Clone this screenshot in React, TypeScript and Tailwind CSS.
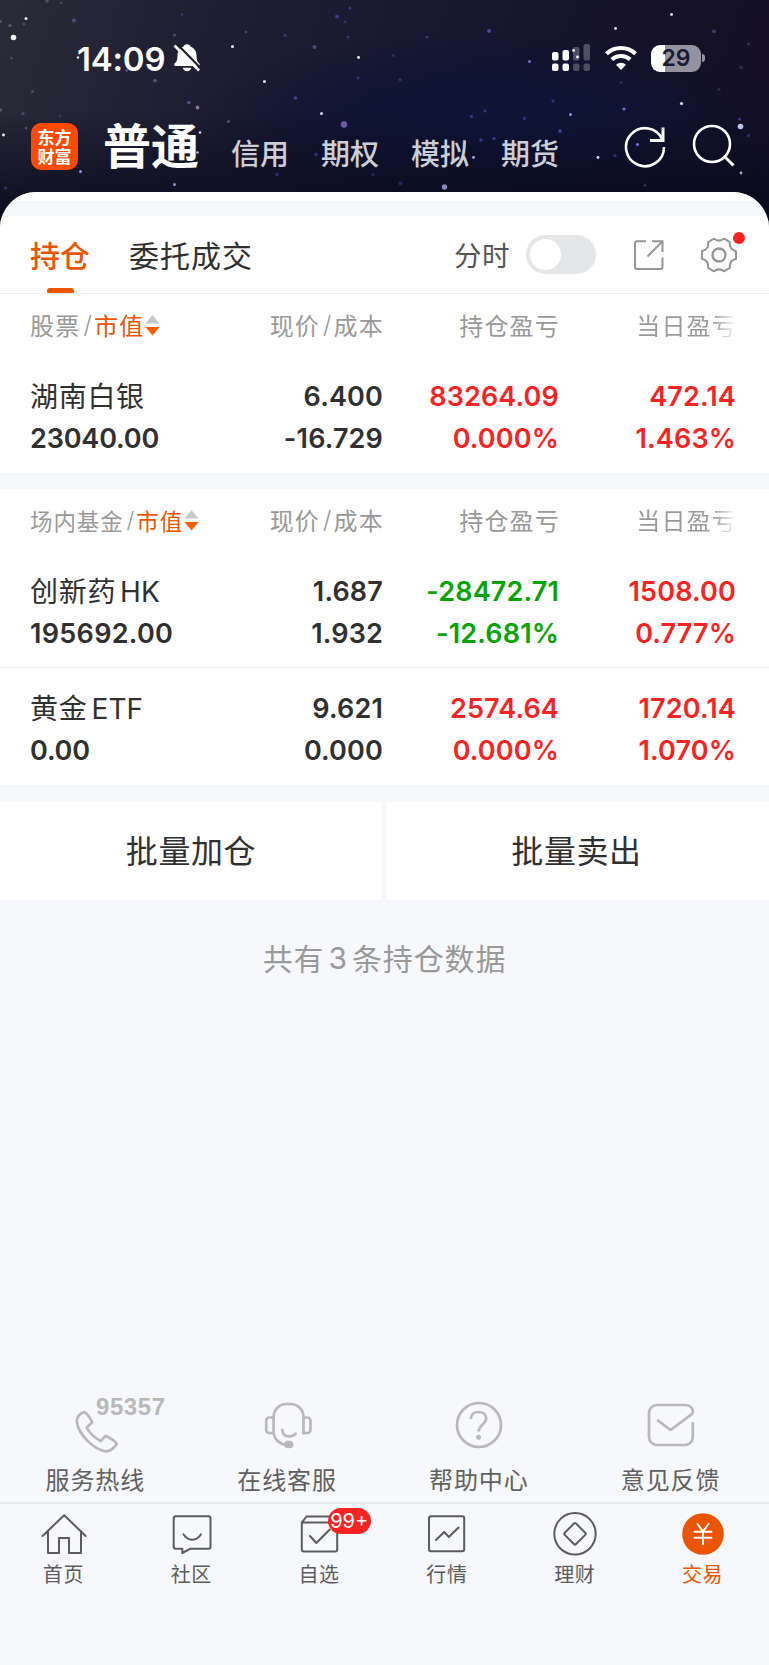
import type { ReactNode } from "react";

type Tone = "dark" | "up" | "down";

type Cell = { top: string; bottom: string; tone: Tone };

type Holding = { name: string; suffix?: string; value: string; cells: Cell[] };

const TONE: Record<Tone, string> = {
  dark: "text-[#303030]",
  up: "text-[#fa2323]",
  down: "text-[#05a405]",
};

const STOCKS: Holding[] = [
  {
    name: "湖南白银",
    value: "23040.00",
    cells: [
      { top: "6.400", bottom: "-16.729", tone: "dark" },
      { top: "83264.09", bottom: "0.000%", tone: "up" },
      { top: "472.14", bottom: "1.463%", tone: "up" },
    ],
  },
];

const FUNDS: Holding[] = [
  {
    name: "创新药",
    suffix: "HK",
    value: "195692.00",
    cells: [
      { top: "1.687", bottom: "1.932", tone: "dark" },
      { top: "-28472.71", bottom: "-12.681%", tone: "down" },
      { top: "1508.00", bottom: "0.777%", tone: "up" },
    ],
  },
  {
    name: "黄金",
    suffix: "ETF",
    value: "0.00",
    cells: [
      { top: "9.621", bottom: "0.000", tone: "dark" },
      { top: "2574.64", bottom: "0.000%", tone: "up" },
      { top: "1720.14", bottom: "1.070%", tone: "up" },
    ],
  },
];

// [x, y, 半径, 颜色, 透明度]
const STARS: [number, number, number, string, number][] = [
  [13.5, 37.5, 2.8, "#fff", 0.95], [26, 18.5, 1.5, "#fff", 0.9], [10, 25.5, 1.5, "#7a78b4", 0.6],
  [0.5, 21.5, 1.5, "#7a78b4", 0.6], [24, 24, 1.5, "#6a68a0", 0.5], [74, 20.5, 2, "#5f5f95", 0.7],
  [47, 1, 1.8, "#6a68a0", 0.6], [61, 3, 1.2, "#6a68a0", 0.5], [11.5, 58, 1.6, "#5a5888", 0.6],
  [78, 57.5, 1.2, "#fff", 0.9], [174.5, 35, 1.6, "#6b5fa0", 0.6], [182, 14.5, 1.4, "#4a4590", 0.6],
  [232.5, 46.5, 1.5, "#fff", 0.95], [246, 32, 1.6, "#544ea0", 0.7], [285, 35.5, 1.4, "#544ea0", 0.6],
  [314.5, 47, 2, "#6a5fa0", 0.7], [337, 16.5, 2, "#5048a8", 0.7], [350, 8, 1.5, "#4a4590", 0.7],
  [345, 22, 1.4, "#4a4590", 0.6], [348, 37, 1.6, "#4a4590", 0.7], [358.5, 57.5, 1.4, "#fff", 0.95],
  [358, 78, 1.6, "#4c4898", 0.6], [264.5, 81.5, 1.5, "#fff", 0.95], [155, 80.5, 1.7, "#7a6aa8", 0.7],
  [126.5, 70.5, 1.4, "#6a5fa0", 0.7], [32.5, 91.5, 1.6, "#5a5888", 0.7], [295.5, 98, 1.8, "#5a54b0", 0.7],
  [189, 102.5, 1.5, "#7a74b0", 0.7], [197.5, 107.5, 1.9, "#a884c0", 0.8], [0.5, 110, 1.6, "#7a78b4", 0.6],
  [23, 113.5, 1.6, "#5a5888", 0.7], [60, 116, 1.5, "#4c4a80", 0.6], [321.5, 113.5, 1.5, "#dfe2ff", 0.95],
  [228.5, 121.5, 1.6, "#6a5fa0", 0.7], [344, 124.5, 3.2, "#8a68c0", 0.8], [3.5, 135, 1.4, "#fff", 0.95],
  [26, 128, 1.5, "#5a5888", 0.7], [200, 132.5, 1.3, "#e9e4ff", 0.95], [197.5, 152.5, 1.3, "#c8c4ff", 0.9],
  [316, 154.5, 1.8, "#3c3ca8", 0.7], [80.5, 171.5, 1.5, "#b8b4ff", 0.8], [174.5, 184.5, 1.5, "#b8b4ff", 0.8],
  [277, 174.5, 1.8, "#3c3ca8", 0.6], [5.5, 188, 1.6, "#4c4a90", 0.6], [373, 174.5, 1.6, "#34308a", 0.7],
  [427, 37, 1.6, "#4a4690", 0.7], [489, 31, 2, "#5650b0", 0.8], [615.5, 28.5, 1.4, "#fff", 0.95],
  [671.5, 14.5, 1.4, "#fff", 0.95], [714, 31.5, 2, "#5a4a88", 0.7], [748.5, 44, 1.6, "#4c3f78", 0.7],
  [529.5, 61.5, 1.5, "#8088ff", 0.8], [400, 79.5, 1.6, "#3c3c8a", 0.7], [393.5, 55.5, 1.4, "#3c3c8a", 0.7],
  [741, 67.5, 1.8, "#3c3470", 0.7], [621, 82.5, 1.5, "#3c3c8a", 0.6], [719, 89.5, 1.6, "#3c3470", 0.7],
  [681.5, 103.5, 1.6, "#dfe2ff", 0.95], [624, 109, 1.6, "#8a88ff", 0.8], [553, 101, 1.7, "#3c3c9a", 0.7],
  [570.5, 114.5, 1.5, "#9aa4ff", 0.9], [485, 111, 1.4, "#4c4cb0", 0.7], [471.5, 116.5, 1.5, "#4c4cb0", 0.7],
  [524.5, 118.5, 1.7, "#3c3c9a", 0.7], [560, 131, 1.8, "#5a54c0", 0.8], [740.5, 126.5, 2.8, "#c8ccff", 0.95],
  [739.5, 119, 1.5, "#4c4cb0", 0.7], [748.5, 135.5, 1.8, "#3c3888", 0.7], [481, 140, 1.7, "#4c48b0", 0.7],
  [494, 138.5, 1.6, "#5a54c0", 0.7], [473.5, 157.5, 1.4, "#b8bcff", 0.9], [598, 157.5, 1.4, "#e4e6ff", 0.95],
  [637.5, 144.5, 1.6, "#8a88ff", 0.8], [615, 155.5, 1.8, "#3c3888", 0.7], [741, 173, 1.4, "#b8bcff", 0.9],
  [444.5, 187, 2.7, "#a4a8d8", 0.8], [400.5, 183.5, 1.9, "#34308a", 0.7], [645, 185.5, 1.3, "#4c4890", 0.7],
];

function StarrySky() {
  return (
    <svg className="absolute inset-0" width="769" height="245" viewBox="0 0 769 245">
      <defs>
        <linearGradient id="sky" x1="0" y1="0" x2="1" y2="0.1">
          <stop offset="0" stopColor="#2a2b37" />
          <stop offset="0.3" stopColor="#1e1d33" />
          <stop offset="0.6" stopColor="#171731" />
          <stop offset="1" stopColor="#140f24" />
        </linearGradient>
        <radialGradient id="glow" cx="0.64" cy="0.52" r="0.4">
          <stop offset="0" stopColor="#0d1539" stopOpacity="0.95" />
          <stop offset="0.5" stopColor="#0d1335" stopOpacity="0.7" />
          <stop offset="1" stopColor="#0c1030" stopOpacity="0" />
        </radialGradient>
        <linearGradient id="dusk" x1="0" y1="0" x2="0" y2="1">
          <stop offset="0.45" stopColor="#090a1c" stopOpacity="0" />
          <stop offset="0.85" stopColor="#090a1c" stopOpacity="0.85" />
        </linearGradient>
      </defs>
      <rect width="769" height="245" fill="url(#sky)" />
      <rect width="769" height="245" fill="url(#glow)" />
      <rect width="769" height="245" fill="url(#dusk)" />
      {STARS.map(([x, y, r, color, opacity]) => (
        <circle key={`${x}-${y}`} cx={x} cy={y} r={r} fill={color} opacity={opacity} />
      ))}
    </svg>
  );
}

function StatusBar() {
  return (
    <div className="flex h-[58px] items-center text-white">
      <span className="ml-[77px] w-[96px] pt-[2px] font-[Inter] text-[33px] leading-none font-semibold tracking-[-0.2px]">
        14:09
      </span>
      <svg width="28" height="30" viewBox="0 0 28 30">
        <path
          d="M14 1.2c1.9 0 3.3 1.1 3.6 2.6 3.6 1.4 5.9 4.4 5.9 8.4 0 5.5 1.3 6.800 2.800 8.400.9 1 .5 2.400-1 2.400H2.600c-1.500 0-1.900-1.400-1-2.400 1.500-1.600 2.900-2.900 2.900-8.400 0-4 2.300-7 5.900-8.400.3-1.500 1.700-2.600 3.600-2.600zM9.800 24.800h8.400c-.4 2-2.100 3.400-4.200 3.400s-3.800-1.400-4.200-3.400z"
          fill="#fff"
        />
        <path d="M3.500 0.500 28 25.500" stroke="#1e1d30" strokeWidth="2.200" />
        <path d="M1.500 2.500 26 27.500" stroke="#fff" strokeWidth="2.600" />
      </svg>
      <svg className="ml-auto" width="38" height="28" viewBox="0 0 38 28">
        <rect x="0" y="8" width="6.500" height="8.500" rx="2" fill="#fff" />
        <rect x="10.500" y="6" width="6.500" height="10.500" rx="2" fill="#fff" />
        <rect x="21" y="3" width="6.500" height="13.500" rx="2" fill="#fff" fillOpacity="0.250" />
        <rect x="31.500" y="0" width="6.500" height="16.500" rx="2" fill="#fff" fillOpacity="0.250" />
        <rect x="0" y="19.500" width="6.500" height="7.500" rx="2" fill="#fff" />
        <rect x="10.500" y="19.500" width="6.500" height="7.500" rx="2" fill="#fff" />
        <rect x="21" y="19.500" width="6.500" height="7.500" rx="2" fill="#fff" fillOpacity="0.250" />
        <rect x="31.500" y="19.500" width="6.500" height="7.500" rx="2" fill="#fff" fillOpacity="0.250" />
        <circle cx="21.500" cy="6.500" r="1.400" fill="#fff" />
        <circle cx="25.500" cy="13" r="1.400" fill="#fff" />
      </svg>
      <svg className="ml-[14px]" width="34" height="26" viewBox="0 0 34 26">
        <path d="M2.500 8.800a21 21 0 0 1 29 0" fill="none" stroke="#fff" strokeWidth="4.200" />
        <path d="M7.800 14.500a13.500 13.500 0 0 1 18.400 0" fill="none" stroke="#fff" strokeWidth="4" />
        <path d="M17 25 12 19.700a7.500 7.500 0 0 1 10 0z" fill="#fff" />
      </svg>
      <div className="mr-[64px] ml-[13px] flex items-center gap-[1px]">
        <div className="flex h-[27px] w-[50px] items-center justify-center rounded-[9px] bg-linear-to-r from-white from-29% to-[#93929f] to-29% font-[Inter] text-[23px] leading-none font-semibold text-[#1b1a33]">
          29
        </div>
        <div className="h-[8px] w-[3px] rounded-r-full bg-[#93929f]" />
      </div>
    </div>
  );
}

const MARKETS = ["信用", "期权", "模拟", "期货"];

function TopNav() {
  return (
    <div className="flex h-[48px] items-center">
      <div className="ml-[31px] flex h-[47px] w-[47px] flex-col items-center justify-center rounded-[10px] bg-[#ff4a00] pb-[1px] text-[17px] leading-[19px] font-bold text-white">
        <span>东方</span>
        <span>财富</span>
      </div>
      <h1 className="-mt-[7px] ml-[25px] text-[48px] leading-none font-bold whitespace-nowrap text-white">普通</h1>
      <nav className="mt-[12px] ml-[32px] flex gap-[32px] text-[29px] leading-none font-medium whitespace-nowrap text-[#cdced6]">
        {MARKETS.map((m) => (
          <span key={m}>{m}</span>
        ))}
      </nav>
      <svg className="mt-[1px] ml-auto" width="44" height="44" viewBox="0 0 44 44" fill="none" stroke="#fff" strokeWidth="2.600">
        <path d="M41 22A19 19 0 1 1 39.500 14.800" />
        <path d="M40 2.500v13H27" strokeWidth="3" />
      </svg>
      <svg className="mr-[33px] ml-[25px]" width="44" height="44" viewBox="0 0 44 44" fill="none" stroke="#fff" strokeWidth="2.600">
        <circle cx="20" cy="20" r="18" />
        <path d="m33 33 8.500 8.500" strokeWidth="3" />
      </svg>
    </div>
  );
}

function TabRow() {
  return (
    <div className="flex h-[78px] items-center border-b border-[#eff0f2] bg-white leading-none text-[#303030]">
      <div className="relative ml-[30px] flex h-full items-center pb-[2px] text-[30px] font-medium text-[#ec5500]">
        持仓
        <span className="absolute bottom-0 left-[17px] h-[5px] w-[27px] rounded-t-[3px] rounded-b-[1px] bg-[#ec5500]" />
      </div>
      <span className="ml-[39px] pb-[2px] text-[30px] tracking-[1px]">委托成交</span>
      <span className="ml-auto text-[27.500px] tracking-[0.500px] text-[#555]">分时</span>
      <button type="button" className="ml-[16px] flex h-[39px] w-[70px] items-center rounded-full bg-[#e5e6e8] p-[4px]">
        <span className="h-[31px] w-[31px] rounded-full bg-white" />
      </button>
      <svg className="ml-[38px]" width="30" height="30" viewBox="0 0 30 30" fill="none" stroke="#959595" strokeWidth="2">
        <path d="M12 1.200H3a2 2 0 0 0-2 2V27a2 2 0 0 0 2 2h23.500a2 2 0 0 0 2-2v-9.500" />
        <path d="M18 1.200h10.500V12M28.500 1.200 13.500 16.500" />
      </svg>
      <div className="relative mr-[31px] ml-[36px]">
        <svg width="38" height="38" viewBox="-19 -19 38 38" fill="none" stroke="#959595" strokeWidth="2" strokeLinejoin="round">
          <path d="M-5 -16.300C-2 -14 2 -14 5 -16.300L10.900 -12.900C10.300 -8.500 12.500 -5 17 -3.800V3.800C12.500 5 10.300 8.500 10.900 12.900L5 16.300C2 14 -2 14 -5 16.300L-10.900 12.900C-10.300 8.500 -12.500 5 -17 3.800V-3.800C-12.500 -5 -10.300 -8.500 -10.900 -12.900Z" />
          <circle r="6.500" strokeWidth="2.300" />
        </svg>
        <span className="absolute top-[-4px] right-[-7px] h-[12px] w-[12px] rounded-full bg-[#fa2323]" />
      </div>
    </div>
  );
}

function SortMark() {
  return (
    <svg className="ml-[1px]" width="15" height="21" viewBox="0 0 15 21">
      <path d="M7.500 0 14.500 8.500H0.500z" fill="#c8c8c8" />
      <path d="M0.500 12h14L7.500 20.500z" fill="#ff5b05" />
    </svg>
  );
}

function Slash() {
  return <span className="mr-[1px] ml-[3px] font-[Inter] font-light">/</span>;
}

const COLS = "grid grid-cols-[200px_153px_176px_177px] pl-[30px]";

function TableHead({ label, small }: { label: string; small?: boolean }) {
  return (
    <div className={`${COLS} h-[62px] items-center text-[24px] leading-none tracking-[1.200px] whitespace-nowrap text-[#999]`}>
      <div className={`flex items-center ${small ? "text-[22.500px] tracking-[0.900px]" : ""}`}>
        <span>{label}</span>
        <Slash />
        <span className="text-[#ec5500]">市值</span>
        <SortMark />
      </div>
      <span className="-mr-[1px] flex justify-end">
        现价
        <Slash />
        成本
      </span>
      <span className="-mr-[1px] text-right">持仓盈亏</span>
      <span className="-mr-[1px] bg-linear-to-r from-[#999] from-86% to-white bg-clip-text text-right text-transparent">当日盈亏</span>
    </div>
  );
}

function HoldingRow({ item, last }: { item: Holding; last: boolean }) {
  return (
    <div
      className={`${COLS} h-[117px] pt-[20px] font-[Inter] text-[27px] leading-[42px] font-semibold tracking-[0.150px] whitespace-nowrap ${
        last ? "" : "border-b border-[#eff0f2]"
      }`}
    >
      <div className="text-[#303030]">
        <div className="-mt-[2px] mb-[2px] flex h-[42px] font-normal">
          <span className="font-['Noto_Sans_CJK_SC'] text-[28px] tracking-[0.700px]">{item.name}</span>
          {item.suffix && <span className="mt-[2px] ml-[4px] text-[28px]">{item.suffix}</span>}
        </div>
        <div className={item.value.startsWith("1") ? "tracking-[0.300px]" : "tracking-[-0.150px]"}>{item.value}</div>
      </div>
      {item.cells.map((c, i) => (
        <div key={i} className={`text-right ${TONE[c.tone]}`}>
          <div>{c.top}</div>
          <div>{c.bottom}</div>
        </div>
      ))}
    </div>
  );
}

function HoldingTable({ label, items, small }: { label: string; items: Holding[]; small?: boolean }) {
  return (
    <section className="bg-white">
      <TableHead label={label} small={small} />
      {items.map((item, i) => (
        <HoldingRow key={item.name} item={item} last={i === items.length - 1} />
      ))}
    </section>
  );
}

function ServiceIcon({ children }: { children: ReactNode }) {
  return (
    <svg
      className="overflow-visible"
      width="48"
      height="56"
      viewBox="0 0 48 56"
      fill="none"
      stroke="#b9b9b9"
      strokeWidth="2.700"
      strokeLinecap="round"
      strokeLinejoin="round"
    >
      {children}
    </svg>
  );
}

const SERVICES: { label: string; icon: ReactNode }[] = [
  {
    label: "服务热线",
    icon: (
      <>
        <path d="M12 12C8 13.500 4.800 17 4.800 21.500 6 34 22 50 34 51.300c4.500 0 8-3.300 10.800-7.300-1.800-3.500-6.800-6-11.300-8.200L28.700 41C23 38 17.500 33 14.700 27.500l5.500-5.200C18 17.500 15.500 13.500 12 12Z" />
        <text x="24" y="15.300" textLength="69" fontFamily="'Liberation Sans', sans-serif" fontSize="24" fontWeight="700" fill="#b9b9b9" stroke="none">
          95357
        </text>
      </>
    ),
  },
  {
    label: "在线客服",
    icon: (
      <>
        <path d="M9.600 31V17a13 13 0 0 1 13-13h3.900a13 13 0 0 1 13 13v16.500" />
        <path d="M9.600 17.500H5.200a3 3 0 0 0-3 3v9.500a3 3 0 0 0 3 3h4.400c.5 6 6 11.500 13 12M39.500 17.500h4a3 3 0 0 1 3 3v9.500a3 3 0 0 1-3 3h-4" />
        <path d="M18.300 29.800c.2 4.500 3 6.700 6.500 6.700 3 0 5.300-1 6.800-2.800" />
        <rect x="20.500" y="41.300" width="8.500" height="6.400" rx="3" fill="#b9b9b9" strokeWidth="1" />
      </>
    ),
  },
  {
    label: "帮助中心",
    icon: (
      <>
        <circle cx="24" cy="25" r="22" />
        <path d="M15.800 19c0-4.500 3.400-7 7.500-7 4.700 0 7.900 2.800 7.900 6.600 0 5.400-7.500 6.400-7.500 12.900" strokeLinecap="butt" />
        <circle cx="23.600" cy="37.300" r="2.500" fill="#b9b9b9" stroke="none" />
      </>
    ),
  },
  {
    label: "意见反馈",
    icon: (
      <path d="M45.800 23v14a8 8 0 0 1-8 8H10a8 8 0 0 1-8-8V13a8 8 0 0 1 8-8h27.500c6 0 8.300 3.500 8.500 6.500 0 1.500-.4 2-1.500 2.800L23.500 30 11 20.500" />
    ),
  },
];

function Services() {
  return (
    <div className="grid w-[767px] grid-cols-4">
      {SERVICES.map((s) => (
        <div key={s.label} className="flex flex-col items-center">
          <ServiceIcon>{s.icon}</ServiceIcon>
          <span className="mt-[10px] -ml-[1px] text-[24px] leading-[26px] tracking-[0.900px] text-[#606060]">{s.label}</span>
        </div>
      ))}
    </div>
  );
}

const NAV: { label: string; icon: ReactNode; badge?: string; active?: boolean }[] = [
  {
    label: "首页",
    icon: <path d="M2.500 26 24.200 5.200 45.600 26M8 21v22h11V28h10v15h12V21" />,
  },
  {
    label: "社区",
    icon: (
      <>
        <path d="M7.700 6.300h32.800a2 2 0 0 1 2 2v28.500a2 2 0 0 1-2 2H22L14.300 43v-4.200H7.700a2 2 0 0 1-2-2V8.300a2 2 0 0 1 2-2Z" />
        <path d="M15.500 24.300c4.500 7.300 13 7.300 17.500 0" />
      </>
    ),
  },
  {
    label: "自选",
    badge: "99+",
    icon: (
      <>
        <path d="M5.800 12.600h35.400v26.800a2 2 0 0 1-2 2H7.800a2 2 0 0 1-2-2ZM5.800 12.600l4.700-6.100H37l4.200 6.100" />
        <path d="m14 26 6.300 7 13.500-13.500" />
      </>
    ),
  },
  {
    label: "行情",
    icon: (
      <>
        <rect x="6" y="6.300" width="35.200" height="35" rx="2" />
        <path d="m13 30 8.200-8 4.600 5L35.500 17.500" />
      </>
    ),
  },
  {
    label: "理财",
    icon: (
      <>
        <circle cx="24" cy="23.800" r="20.700" />
        <rect x="16" y="15.800" width="16" height="16" rx="1.500" transform="rotate(45 24 23.800)" />
      </>
    ),
  },
  {
    label: "交易",
    active: true,
    icon: (
      <>
        <circle cx="24" cy="24" r="20.800" fill="#ec5500" stroke="none" />
        <path d="m18.500 14 5.500 7.500 5.500-7.500M24 21.500v13M15.500 21.800h17M15.500 27.700h17" stroke="#fff" />
      </>
    ),
  },
];

function BottomNav() {
  return (
    <div className="border-t-2 border-[#e9eaec] pt-[6px]">
      <div className="grid w-[767px] grid-cols-6">
        {NAV.map((n) => (
          <div key={n.label} className="relative flex flex-col items-center">
            <svg
              width="48"
              height="48"
              viewBox="0 0 48 48"
              fill="none"
              stroke="#5c5c5c"
              strokeWidth="2"
              strokeLinecap="round"
              strokeLinejoin="round"
            >
              {n.icon}
            </svg>
            {n.badge && (
              <span className="absolute top-[-2px] left-[72px] flex h-[26px] w-[43px] items-center justify-center rounded-full bg-[#fa2323] font-[Inter] text-[20px] leading-none text-white">
                {n.badge}
              </span>
            )}
            <span className={`mt-[4px] -ml-[1px] text-[20px] leading-[24px] tracking-[0.600px] ${n.active ? "text-[#ec5500]" : "text-[#5c5c5c]"}`}>
              {n.label}
            </span>
          </div>
        ))}
      </div>
    </div>
  );
}

export default function App() {
  return (
    <div className="relative flex h-[1665px] w-[769px] flex-col overflow-hidden bg-[#f7f8fb] font-['Noto_Sans_CJK_SC',sans-serif]">
      <StarrySky />
      <header className="relative h-[192px] pt-[29px]">
        <StatusBar />
        <div className="mt-[35px]">
          <TopNav />
        </div>
      </header>

      <main className="relative flex-1 overflow-hidden rounded-t-[36px] bg-[#f7f8fb]">
        <div className="flex h-full flex-col">
          <div className="h-[9px] bg-white" />
          <div className="mt-[15px]">
            <TabRow />
          </div>
          <HoldingTable label="股票" items={STOCKS} />
          <div className="mt-[16px]">
            <HoldingTable label="场内基金" items={FUNDS} small />
          </div>

          <div className="mt-[17px] grid grid-cols-[382px_1fr] gap-[4px] text-[32px] leading-none tracking-[0.600px] text-[#303030]">
            <button type="button" className="h-[98px] bg-white pb-[4px]">批量加仓</button>
            <button type="button" className="h-[98px] bg-white pr-[2px] pb-[4px]">批量卖出</button>
          </div>

          <p className="mt-[41px] flex justify-center text-[30px] leading-[32px] tracking-[0.900px] text-[#999]">
            共有<span className="mx-[4px] pt-[1px] font-[Inter]">3</span>条持仓数据
          </p>

          <div className="mt-auto">
            <Services />
            <div className="mt-[10px] h-[163px]">
              <BottomNav />
            </div>
          </div>
        </div>
      </main>
    </div>
  );
}
